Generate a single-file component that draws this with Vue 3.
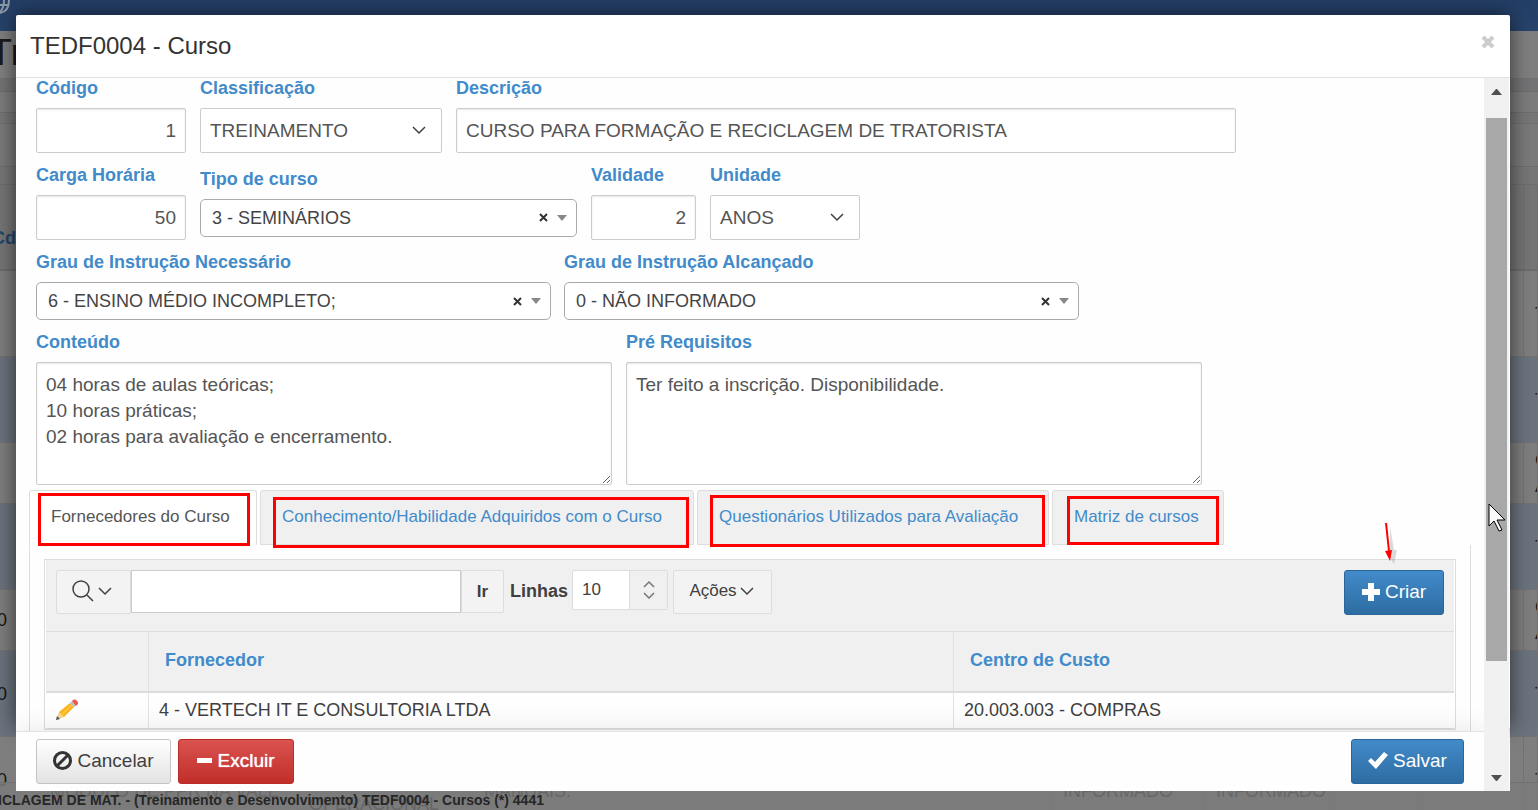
<script setup>
import { ref } from 'vue'

const codigo = ref('1')
const classificacao = ref('TREINAMENTO')
const descricao = ref('CURSO PARA FORMAÇÃO E RECICLAGEM DE TRATORISTA')
const carga = ref('50')
const tipo = ref('3 - SEMINÁRIOS')
const validade = ref('2')
const unidade = ref('ANOS')
const grauNecessario = ref('6 - ENSINO MÉDIO INCOMPLETO;')
const grauAlcancado = ref('0 - NÃO INFORMADO')
const conteudo = ref('04 horas de aulas teóricas;\n10 horas práticas;\n02 horas para avaliação e encerramento.')
const requisitos = ref('Ter feito a inscrição. Disponibilidade.')
const busca = ref('')
const linhas = ref('10')

const tabs = [
  { text: 'Fornecedores do Curso', mark: 'mark-a' },
  { text: 'Conhecimento/Habilidade Adquiridos com o Curso', mark: 'mark-b' },
  { text: 'Questionários Utilizados para Avaliação', mark: 'mark-c' },
  { text: 'Matriz de cursos', mark: 'mark-d' }
]
const activeTab = ref(0)

const backRows = [
  { size: 'tall', first: '', last: ['T'] },
  { size: 'tall', first: '', last: ['T'] },
  { size: 'short', first: '', last: ['C', 'A'] },
  { size: 'tall', first: '', last: ['T'] },
  { size: 'short', first: '0', last: ['C', 'A'] },
  { size: 'tall', first: '0', last: ['T'] }
]
</script>

<template>
  <div class="page">
    <div class="backdrop-page">
      <div class="navbar">
        <svg width="10" height="14" viewBox="0 0 10 14" fill="none" stroke="#8c98a8" stroke-width="2" aria-hidden="true">
          <path d="M9 0C9 7 6 12 0 13M4 0C4 5 3 9 0 12M0 5h9" />
        </svg>
      </div>
      <div class="page-title"><span>Tr</span></div>
      <div class="band"></div>
      <div class="strip s1"></div>
      <div class="strip s2"></div>
      <div class="strip s3"></div>
      <div class="strip s4"></div>
      <table class="back-table">
        <colgroup>
          <col class="k0" /><col class="k1" /><col class="k2" /><col class="k3" /><col class="k4" />
          <col class="k5" /><col class="k6" /><col class="k7" /><col />
        </colgroup>
        <thead>
          <tr>
            <th class="first">Cd</th>
            <th v-for="n in 8" :key="n"></th>
          </tr>
        </thead>
        <tbody>
          <tr v-for="(row, i) in backRows" :key="i" :class="row.size">
            <td class="first">{{ row.first }}</td>
            <td v-for="n in 7" :key="n"></td>
            <td><div v-for="line in row.last" :key="line">{{ line }}</div></td>
          </tr>
          <tr class="tall final">
            <td class="first">0</td>
            <td class="second-line">MODULO DE PPR NA VALE</td>
            <td class="third-line">OPERACIONAL</td>
            <td class="second-line">MANUAIS.</td>
            <td class="second-line">INFORMADO</td>
            <td class="second-line">INFORMADO</td>
            <td></td>
            <td></td>
            <td>T</td>
          </tr>
        </tbody>
      </table>
    </div>
    <div class="status">CICLAGEM DE MAT. - (Treinamento e Desenvolvimento) TEDF0004 - Cursos (*) 4441</div>

    <section class="modal" role="dialog" aria-labelledby="dlg-title">
      <header class="modal-head">
        <h1 id="dlg-title">TEDF0004 - Curso</h1>
        <button class="close" type="button" aria-label="Fechar">
          <svg width="14" height="14" viewBox="0 0 14 14" stroke="#ccc" stroke-width="4" aria-hidden="true">
            <path d="M2 2l10 10M12 2L2 12" />
          </svg>
        </button>
      </header>

      <div class="modal-main">
        <div class="column">
          <div class="body">
            <form class="form" @submit.prevent>
              <div class="row">
                <div class="field w150">
                  <label for="codigo">Código</label>
                  <input id="codigo" v-model="codigo" class="box num" type="text" />
                </div>
                <div class="field w242">
                  <label for="classif">Classificação</label>
                  <div class="select">
                    <select id="classif" v-model="classificacao" class="box">
                      <option>TREINAMENTO</option>
                    </select>
                    <svg width="14" height="9" viewBox="0 0 14 9" aria-hidden="true"><path d="M1 1l6 6 6-6" /></svg>
                  </div>
                </div>
                <div class="field w780">
                  <label for="descr">Descrição</label>
                  <input id="descr" v-model="descricao" class="box" type="text" />
                </div>
              </div>

              <div class="row">
                <div class="field w150">
                  <label for="carga">Carga Horária</label>
                  <input id="carga" v-model="carga" class="box num" type="text" />
                </div>
                <div class="field w377">
                  <label for="tipo">Tipo de curso</label>
                  <div class="combo">
                    <select id="tipo" v-model="tipo"><option>3 - SEMINÁRIOS</option></select>
                    <button type="button" aria-label="Limpar tipo de curso">
                      <svg width="9" height="9" viewBox="0 0 9 9"><path d="M1 1l7 7M8 1L1 8" /></svg>
                    </button>
                    <i class="caret"></i>
                  </div>
                </div>
                <div class="field w105">
                  <label for="validade">Validade</label>
                  <input id="validade" v-model="validade" class="box num" type="text" />
                </div>
                <div class="field w150">
                  <label for="unidade">Unidade</label>
                  <div class="select">
                    <select id="unidade" v-model="unidade" class="box"><option>ANOS</option></select>
                    <svg width="14" height="9" viewBox="0 0 14 9" aria-hidden="true"><path d="M1 1l6 6 6-6" /></svg>
                  </div>
                </div>
              </div>

              <div class="row degrees">
                <div class="field w515">
                  <label for="graun">Grau de Instrução Necessário</label>
                  <div class="combo">
                    <select id="graun" v-model="grauNecessario"><option>6 - ENSINO MÉDIO INCOMPLETO;</option></select>
                    <button type="button" aria-label="Limpar grau necessário">
                      <svg width="9" height="9" viewBox="0 0 9 9"><path d="M1 1l7 7M8 1L1 8" /></svg>
                    </button>
                    <i class="caret"></i>
                  </div>
                </div>
                <div class="field w515">
                  <label for="graua">Grau de Instrução Alcançado</label>
                  <div class="combo">
                    <select id="graua" v-model="grauAlcancado"><option>0 - NÃO INFORMADO</option></select>
                    <button type="button" aria-label="Limpar grau alcançado">
                      <svg width="9" height="9" viewBox="0 0 9 9"><path d="M1 1l7 7M8 1L1 8" /></svg>
                    </button>
                    <i class="caret"></i>
                  </div>
                </div>
              </div>

              <div class="row">
                <div class="field w576">
                  <label for="conteudo">Conteúdo</label>
                  <textarea id="conteudo" v-model="conteudo" class="box area"></textarea>
                </div>
                <div class="field w576">
                  <label for="req">Pré Requisitos</label>
                  <textarea id="req" v-model="requisitos" class="box area"></textarea>
                </div>
              </div>
            </form>

            <div class="tabs" role="tablist">
              <button
                v-for="(tab, i) in tabs"
                :key="tab.text"
                class="tab"
                :class="{ active: i === activeTab }"
                type="button"
                role="tab"
                :aria-selected="i === activeTab"
                @click="activeTab = i"
              >
                {{ tab.text }}
                <span class="mark" :class="tab.mark"></span>
              </button>
            </div>

            <div class="panel">
              <div class="report">
                <div class="toolbar">
                  <button class="tool lens" type="button" aria-label="Selecionar coluna">
                    <svg width="22" height="22" viewBox="0 0 22 22" aria-hidden="true">
                      <circle cx="9" cy="9" r="8" /><path d="M15 15l6 6" />
                    </svg>
                    <svg width="14" height="9" viewBox="0 0 14 9" aria-hidden="true"><path d="M1 1l6 6 6-6" /></svg>
                  </button>
                  <input v-model="busca" class="search" type="text" aria-label="Pesquisar" />
                  <button class="tool go" type="button">Ir</button>
                  <label class="lines-label" for="linhas">Linhas</label>
                  <div class="lines">
                    <select id="linhas" v-model="linhas"><option>10</option></select>
                    <span class="stepper">
                      <svg width="12" height="18" viewBox="0 0 12 18" aria-hidden="true"><path d="M1 6l5-5 5 5M1 12l5 5 5-5" /></svg>
                    </span>
                  </div>
                  <button class="tool actions" type="button">
                    Ações
                    <svg width="14" height="9" viewBox="0 0 14 9" aria-hidden="true"><path d="M1 1l6 6 6-6" /></svg>
                  </button>
                  <button class="btn primary create" type="button">
                    <svg width="18" height="18" viewBox="0 0 18 18" aria-hidden="true"><path fill="#fff" d="M6 0h6v6h6v6h-6v6H6v-6H0V6h6z" /></svg>
                    Criar
                    <svg class="pointer" width="20" height="46" viewBox="0 0 20 46" aria-hidden="true">
                      <path d="M5 4l4 24h3l-3 14-4-6z" fill="#888" opacity=".3" />
                      <path d="M1 1l3 28" fill="none" stroke="red" stroke-width="2" />
                      <path d="M0 29l7-1-2 11z" fill="red" />
                    </svg>
                  </button>
                </div>
                <table class="grid">
                  <colgroup><col class="g0" /><col class="g1" /><col /></colgroup>
                  <thead>
                    <tr>
                      <th></th>
                      <th>Fornecedor</th>
                      <th>Centro de Custo</th>
                    </tr>
                  </thead>
                  <tbody>
                    <tr>
                      <td>
                        <a href="#" aria-label="Editar">
                          <svg width="22" height="22" viewBox="0 0 22 22" aria-hidden="true">
                            <path d="M0 21l3-8 5 5z" fill="#f7d58c" />
                            <path d="M0 21l1-4 3 3z" fill="#4b5563" />
                            <path d="M3 13L14 4l4 4L8 18z" fill="#f9b41f" />
                            <path d="M5 15L15 6l1 1L6 17z" fill="#ffc83d" />
                            <path d="M14 4l2-2 4 5-2 1z" fill="#b6bec8" />
                            <path d="M16 2c2-2 3-2 5 0s1 3-1 5z" fill="#f05545" />
                          </svg>
                        </a>
                      </td>
                      <td>4 - VERTECH IT E CONSULTORIA LTDA</td>
                      <td>20.003.003 - COMPRAS</td>
                    </tr>
                  </tbody>
                </table>
              </div>
            </div>
          </div>

          <footer class="modal-foot">
            <button class="btn plain" type="button">
              <svg width="19" height="19" viewBox="0 0 19 19" fill="none" stroke="#333" stroke-width="3" aria-hidden="true">
                <circle cx="9.500" cy="9.500" r="8" /><path d="M4 15L15 4" />
              </svg>
              Cancelar
            </button>
            <button class="btn danger" type="button">
              <svg width="15" height="19" viewBox="0 0 15 19" aria-hidden="true"><rect y="7" width="15" height="5" fill="#fff" /></svg>
              Excluir
            </button>
            <button class="btn primary save" type="button">
              <svg width="20" height="18" viewBox="0 0 20 18" aria-hidden="true">
                <path d="M0 9l3-3 4 4L16 0l4 3L8 17z" fill="#fff" />
              </svg>
              Salvar
            </button>
          </footer>
        </div>

        <div class="scrollbar" aria-hidden="true">
          <span class="arrow up"><svg width="11" height="6" viewBox="0 0 11 6"><path d="M0 6l5-6h1l5 6z" fill="#505050" /></svg></span>
          <span class="gap-top"></span>
          <span class="thumb"></span>
          <span class="gap-bottom"></span>
          <span class="arrow down"><svg width="11" height="6" viewBox="0 0 11 6"><path d="M0 0h11L6 6H5z" fill="#505050" /></svg></span>
          <svg class="cursor" width="18" height="30" viewBox="0 0 18 30">
            <path d="M1 1v22l5-5 5 10 3-1-5-10h8z" fill="#fafafa" stroke="#000" stroke-width="1" />
          </svg>
        </div>
      </div>
    </section>
  </div>
</template>

<style>
html, body { margin: 0; overflow: hidden; }
</style>

<style scoped>
.page {
  position: relative;
  height: 100vh;
  overflow: hidden;
  background: #7e7e7e;
  color: #404040;
  font-family: "Liberation Sans", Arial, sans-serif;
  font-size: 18px;
  line-height: 26px;
}
.page *, .page *::before { box-sizing: border-box; }
button, input, select, textarea { font: inherit; color: inherit; margin: 0; }
button { cursor: pointer; }
svg { display: block; flex: none; }

/* Page behind the dialog */
.navbar { height: 31px; background: linear-gradient(#243e66, #27446c); }
.page-title { height: 47px; background: #7f7f7f; color: #1b1b1b; font-size: 36px; line-height: 43px; }
.page-title span { margin-left: -10px; }
.band { height: 14px; background: #747476; border-top: 1px solid #727272; border-bottom: 1px solid #6c6c6c; }
.strip { border-bottom: 1px solid #6e6e6e; background: #7c7c7c; }
.s1 { height: 21px; }
.s2 { height: 11px; background: #777; }
.s3 { height: 43px; background: #7a7a7a; }
.s4 { height: 18px; background: #767676; }
.back-table {
  width: calc(100% + 20px);
  margin-left: -20px;
  table-layout: fixed;
  border-collapse: separate;
  border-spacing: 0;
  color: #161616;
}
.k0 { width: 59px; }
.k1 { width: 259px; }
.k2 { width: 175px; }
.k3 { width: 579px; }
.k4 { width: 153px; }
.k5 { width: 130px; }
.k6 { width: 84px; }
.k7 { width: 105px; }
.back-table th { height: 86px; padding: 22px 0 0; background: #757575; border-right: 1px solid #6e6e6e; border-bottom: 2px solid #6c6c6c; }
.back-table th.first { color: #1f456b; text-align: left; padding-left: 12px; }
.back-table td { padding: 0 0 0 11px; border-right: 1px solid #727272; border-bottom: 1px solid #727272; white-space: nowrap; overflow: hidden; }
.back-table td.first { text-align: right; padding: 0 31px 0 0; }
.back-table td > div { height: 26px; }
.tall { height: 86px; }
.short { height: 61px; }
.back-table tbody tr:nth-child(even) { background: #6b737e; }
.back-table .second-line { vertical-align: top; padding-top: 41px; }
.back-table .third-line { vertical-align: top; padding-top: 54px; }
.status {
  position: absolute;
  left: 0;
  right: 0;
  bottom: 0;
  height: 28px;
  padding-top: 8px;
  border-top: 1px solid #707070;
  background: rgba(122, 122, 122, 0.8);
  color: #262626;
  font-size: 14px;
  font-weight: bold;
  line-height: 18px;
  text-indent: -12px;
  white-space: nowrap;
}

/* Dialog */
.modal {
  position: absolute;
  z-index: 2;
  top: 15px;
  right: 28px;
  bottom: 19px;
  left: 16px;
  display: flex;
  flex-direction: column;
  background: #fff;
  border-radius: 2px 2px 0 0;
}
.modal::before {
  content: "";
  position: absolute;
  z-index: -1;
  inset: 0 0 63px 0;
  box-shadow: 0 0 20px rgba(0, 0, 0, 0.6);
}
.modal-head {
  flex: none;
  display: flex;
  justify-content: space-between;
  align-items: center;
  height: 63px;
  padding: 0 15px 0 14px;
  border-bottom: 1px solid #e2e2e2;
}
h1 { margin: 0; font-size: 24px; font-weight: normal; line-height: 32px; color: #333; }
.close { display: flex; align-self: flex-start; margin-top: 20px; padding: 0; border: 0; background: none; }
.modal-main { flex: 1; min-height: 0; display: flex; padding-right: 1px; }
.column { flex: 1; min-width: 0; display: flex; flex-direction: column; background: #fefefe; }
.body { flex: 1; min-height: 0; overflow: hidden; }

/* Form */
.form { display: flex; flex-direction: column; gap: 12px; padding: 0 20px; }
.row { display: flex; align-items: center; gap: 14px; }
.degrees { gap: 13px; }
.field { display: flex; flex-direction: column; gap: 10px; min-width: 0; }
.w105 { flex: 0 1 105px; }
.w150 { flex: 0 1 150px; }
.w242 { flex: 0 1 242px; }
.w377 { flex: 0 1 377px; }
.w515 { flex: 0 1 515px; }
.w576 { flex: 0 1 576px; }
.w780 { flex: 0 1 780px; }
.field label { height: 20px; color: #428bca; font-weight: bold; line-height: 20px; white-space: nowrap; }
.box {
  width: 100%;
  height: 45px;
  padding: 0 9px;
  border: 1px solid #ccc;
  border-radius: 2px;
  background: #fff;
  box-shadow: inset 0 1px 2px rgba(0, 0, 0, 0.1);
  color: #555;
  font-size: 19px;
}
.num { text-align: right; }
.select { position: relative; }
.select .box { display: block; appearance: none; box-shadow: none; }
.select svg, .tool svg, .lines svg { fill: none; stroke: #404040; stroke-width: 1.500; }
.select svg { position: absolute; top: 18px; right: 16px; pointer-events: none; }
.area { height: 123px; padding: 9px; line-height: 26px; resize: both; }
.combo {
  display: flex;
  align-items: center;
  height: 38px;
  padding: 0 9px 0 11px;
  border: 1px solid #aaa;
  border-radius: 5px;
  background: #fff;
}
.combo select { flex: 1; min-width: 0; height: 34px; padding: 0; border: 0; background: none; appearance: none; color: #444; }
.combo button { padding: 0; border: 0; background: none; }
.combo button svg { fill: none; stroke: #333; stroke-width: 2; }
.caret { margin-left: 9px; border: 5px solid transparent; border-top: 6px solid #888; border-bottom: 0; }

/* Tabs */
.tabs {
  display: grid;
  grid-template-columns: 228px 434px 352px 172px;
  gap: 3px;
  width: max-content;
  margin: 5px 0 0 13px;
}
.tab {
  position: relative;
  height: 55px;
  padding: 0 0 2px 21px;
  border: 1px solid #ddd;
  border-radius: 3px 3px 0 0;
  background: #f0f0f0;
  color: #428bca;
  font-size: 17px;
  text-align: left;
  white-space: nowrap;
}
.tab.active { background: #fff; border-bottom-color: #fff; color: #555; }
.mark { position: absolute; border: 3px solid #f00; pointer-events: none; }
.mark-a { inset: 2px 6px -2px 8px; }
.mark-b { inset: 6px 4px -4px 12px; }
.mark-c { inset: 4px 3px -3px 12px; }
.mark-d { inset: 5px 4px -1px 14px; }

.panel { margin: 0 13px; padding: 14px 14px 20px; border: solid #ddd; border-width: 0 1px; }
.report { padding: 0 1px; border: 1px solid #ddd; }
.toolbar { display: flex; align-items: flex-start; height: 72px; padding: 10px 10px 0; background: #f0f0f0; border-bottom: 1px solid #ddd; }
.tool {
  display: flex;
  align-items: center;
  justify-content: center;
  height: 44px;
  border: 1px solid #ddd;
  border-radius: 2px;
  background: #f3f3f3;
  font-size: 17px;
}
.lens { width: 75px; gap: 4px; padding: 0 4px 2px 0; }
.search { flex: 0 1 330px; min-width: 0; height: 43px; border: 1px solid #ccc; background: #fff; }
.go { width: 43px; height: 43px; padding: 0; font-weight: bold; }
.lines-label { width: 68px; padding-left: 6px; font-weight: bold; line-height: 42px; }
.lines { display: flex; width: 96px; height: 40px; position: relative; }
.lines select { width: 100%; padding: 0 0 0 9px; border: 1px solid #ddd; border-radius: 2px; background: #fff; appearance: none; font-size: 17px; }
.lines svg { stroke: #777; }
.stepper {
  position: absolute;
  inset: 1px 1px 1px auto;
  width: 38px;
  display: flex;
  align-items: center;
  justify-content: center;
  border-left: 1px solid #ddd;
  background: #f0f0f0;
  pointer-events: none;
}
.actions { width: 99px; margin-left: 5px; gap: 3px; padding: 0 2px 2px 0; }
.create { position: relative; width: 100px; margin-left: auto; }
.pointer { position: absolute; top: -49px; left: 40px; pointer-events: none; }

.grid { width: 100%; table-layout: fixed; border-collapse: separate; border-spacing: 0; }
.g0 { width: 102px; }
.g1 { width: 805px; }
.grid th { height: 61px; padding: 0 0 4px 16px; background: #f0f0f0; border-bottom: 2px solid #ddd; color: #428bca; text-align: left; }
.grid td { height: 36px; padding: 0 0 2px 10px; border-bottom: 1px solid #ddd; }
.grid th + th, .grid td + td { border-left: 1px solid #e2e2e2; }
.grid a { display: block; }

/* Buttons */
.btn {
  display: flex;
  align-items: center;
  justify-content: center;
  gap: 5px;
  height: 45px;
  padding: 0 0 2px;
  border: 1px solid;
  border-radius: 3px;
  font-size: 19px;
}
.plain { width: 135px; border-color: #c4c4c4; background: linear-gradient(#fff, #e3e3e3); color: #404040; }
.danger { width: 116px; border-color: #b92c28; background: linear-gradient(#d9534f, #c12e2a); color: #fff; text-shadow: 0 0 1px #fff; }
.primary { border-color: #2b669a; background: linear-gradient(#428bca, #2d6ca2); color: #fff; }
.modal-foot {
  position: relative;
  flex: none;
  display: flex;
  gap: 7px;
  height: 60px;
  padding: 7px 20px;
  border-top: 1px solid #e2e2e2;
  background: #fefefe;
  box-shadow: 0 -4px 24px rgba(0, 0, 0, 0.08);
  clip-path: inset(-50px 0 0 0);
}
.save { width: 113px; margin-left: auto; }

/* Scrollbar */
.scrollbar { position: relative; flex: none; width: 25px; display: flex; flex-direction: column; background: #f1f1f1; padding: 0 2px; }
.arrow { flex: none; height: 27px; display: flex; align-items: center; justify-content: center; }
.gap-top { flex: 13; }
.thumb { flex: 543; background: #a8a8a8; }
.gap-bottom { flex: 103; }
.cursor { position: absolute; top: 425px; left: 4px; }
</style>
